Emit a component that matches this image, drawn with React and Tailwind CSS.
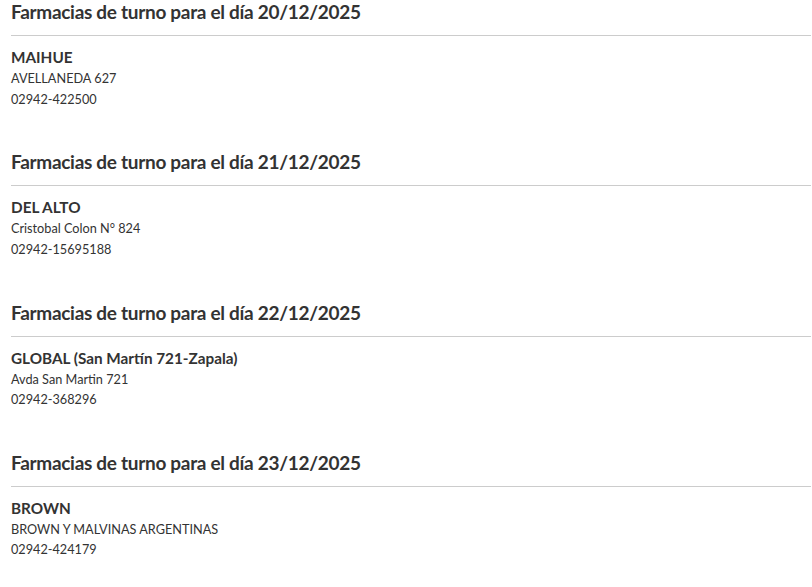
import React from "react";

const turnos = [
  {
    fecha: "20/12/2025",
    nombre: "MAIHUE",
    direccion: "AVELLANEDA 627",
    telefono: "02942-422500",
  },
  {
    fecha: "21/12/2025",
    nombre: "DEL ALTO",
    direccion: "Cristobal Colon N° 824",
    telefono: "02942-15695188",
  },
  {
    fecha: "22/12/2025",
    nombre: "GLOBAL (San Martín 721-Zapala)",
    direccion: "Avda San Martin 721",
    telefono: "02942-368296",
  },
  {
    fecha: "23/12/2025",
    nombre: "BROWN",
    direccion: "BROWN Y MALVINAS ARGENTINAS",
    telefono: "02942-424179",
  },
];

const App = () => {
  return (
    <div className="bg-white min-h-screen pl-[11px] pr-[1px] text-[#333] font-['Lato','Liberation_Sans',sans-serif]">
      {turnos.map((t, i) => (
        <section key={i} className="h-[150.33px]">
          <h2 className="text-[19px] leading-[24px] font-bold tracking-[-0.3px]">
            Farmacias de turno para el día {t.fecha}
          </h2>
          <hr className="mt-[11px] border-0 border-t border-[#cccccc]" />
          <div className="mt-[11px]">
            <p className="text-[15.3px] leading-[21px] font-bold">{t.nombre}</p>
            <p className="text-[12.7px] leading-[20.5px]">{t.direccion}</p>
            <p className="text-[12.7px] leading-[20.5px]">{t.telefono}</p>
          </div>
        </section>
      ))}
    </div>
  );
};

export default App;
